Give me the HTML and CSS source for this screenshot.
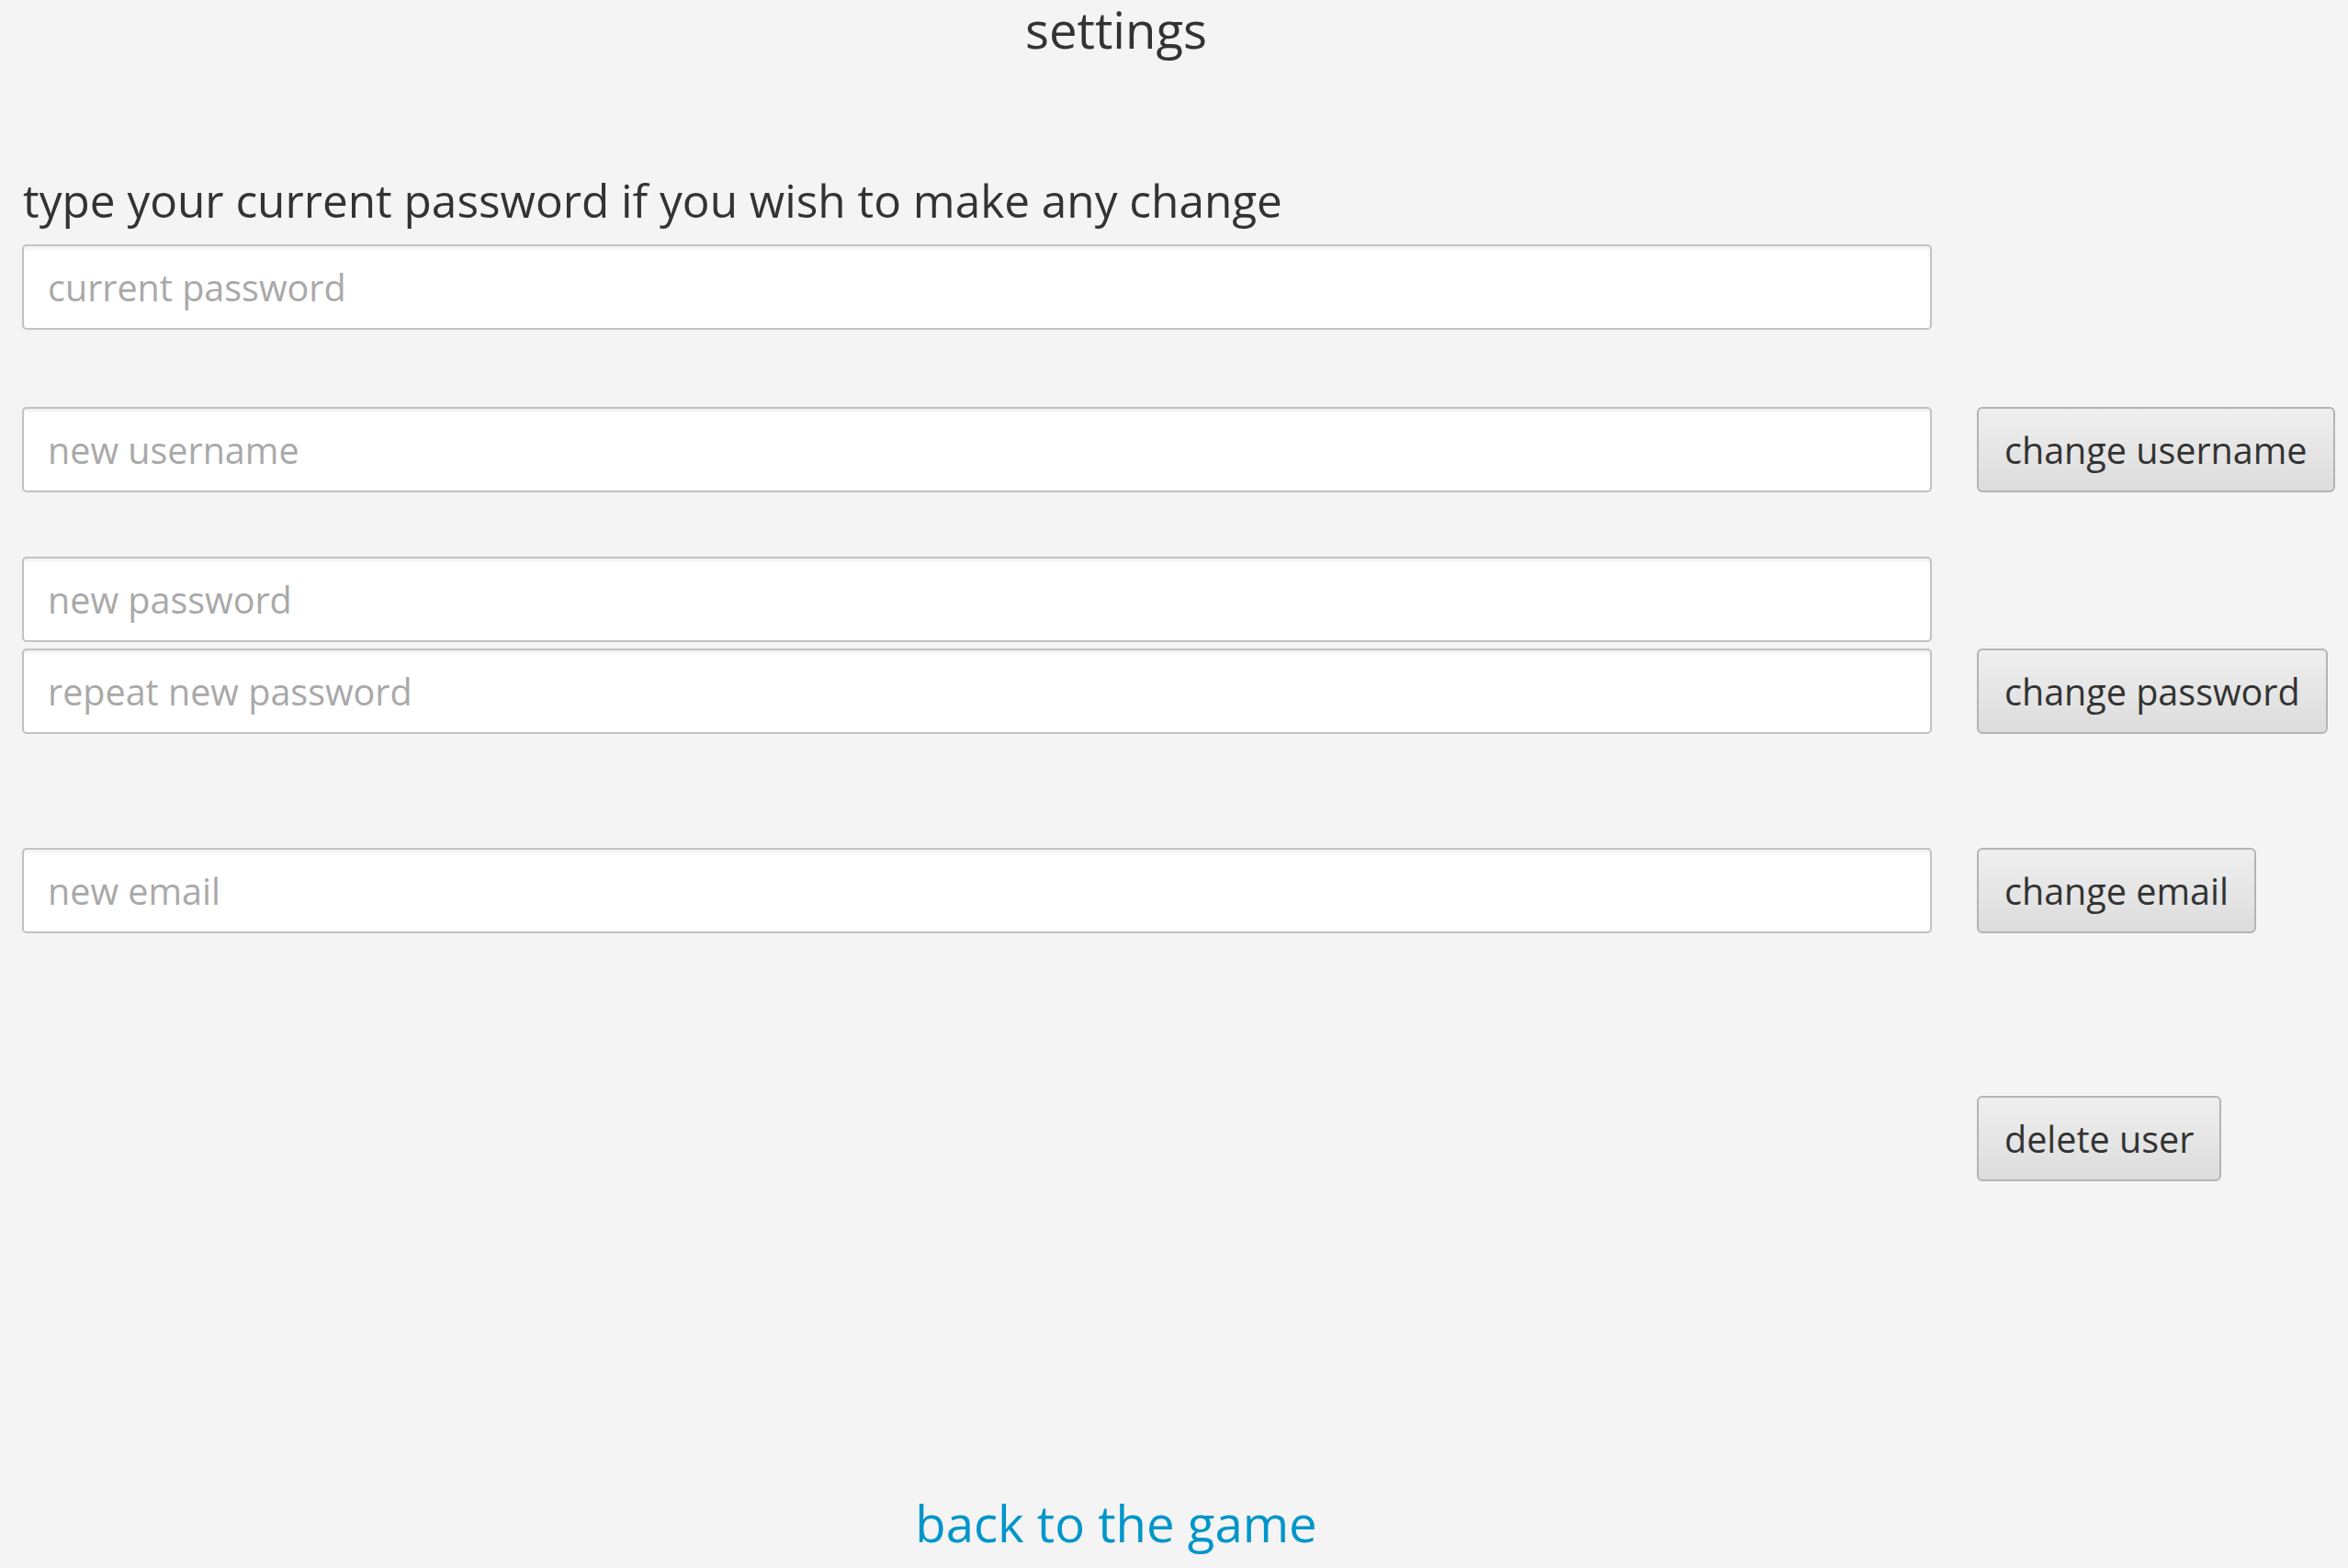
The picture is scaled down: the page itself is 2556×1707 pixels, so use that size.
FILE: index.html
```html
<!DOCTYPE html>
<html lang="en">
<head>
<meta charset="utf-8">
<title>settings</title>
<link rel="stylesheet" href="styles.css">
</head>
<body>
<div class="page">
  <h1 class="title">settings</h1>
  <p class="hint">type your current password if you wish to make any change</p>
  <div class="row row-current">
    <input class="field" type="password" placeholder="current password">
  </div>
  <div class="row row-username">
    <input class="field" type="text" placeholder="new username">
    <button class="btn">change username</button>
  </div>
  <div class="row row-newpass">
    <input class="field" type="password" placeholder="new password">
  </div>
  <div class="row row-repeat">
    <input class="field" type="password" placeholder="repeat new password">
    <button class="btn">change password</button>
  </div>
  <div class="row row-email">
    <input class="field" type="email" placeholder="new email">
    <button class="btn">change email</button>
  </div>
  <div class="row row-delete">
    <span class="spacer"></span>
    <button class="btn">delete user</button>
  </div>
  <div class="footer">
    <a class="back" href="#">back to the game</a>
  </div>
</div>
</body>
</html>
```
FILE: styles.css
```css
html, body {
  margin: 0;
  padding: 0;
  background: #f4f4f4;
}
body {
  font-family: "Open Sans", "Noto Sans", sans-serif;
  color: #333333;
  width: 2556px;
  height: 1707px;
  overflow: hidden;
}
.page {
  width: 2556px;
  display: flex;
  flex-direction: column;
}
.title {
  width: 2430px;
  margin: 0;
  height: 64px;
  font-weight: 400;
  font-size: 54.5px;
  line-height: 64px;
  text-align: center;
  color: #333333;
}
.hint {
  margin: 124px 0 0 25px;
  font-size: 49.5px;
  line-height: 60px;
  height: 60px;
  color: #333333;
}
.row {
  display: flex;
  align-items: center;
  gap: 49px;
  padding-left: 24px;
  height: 93px;
}
.row-current { margin-top: 18px; }
.row-username { margin-top: 84px; }
.row-newpass { margin-top: 70px; }
.row-repeat { margin-top: 7px; }
.row-email { margin-top: 124px; }
.row-delete { margin-top: 177px; }
.field {
  flex: none;
  box-sizing: border-box;
  width: 2079px;
  height: 93px;
  margin: 0;
  padding: 0 26px;
  border: 2px solid #c2c2c2;
  border-radius: 5px;
  background: #ffffff;
  box-shadow: inset 0 3px 3px rgba(0, 0, 0, 0.06);
  font-family: inherit;
  font-size: 39.5px;
  color: #333333;
  outline: none;
}
.field::placeholder {
  color: #a9a9a9;
}
.spacer {
  width: 2079px;
  flex: none;
}
.btn {
  flex: none;
  box-sizing: border-box;
  height: 93px;
  margin: 0;
  padding: 0 28px;
  border: 2px solid #b4b4b4;
  border-radius: 6px;
  background: linear-gradient(#efefef, #dcdcdc);
  font-family: inherit;
  font-size: 39.5px;
  color: #333333;
  white-space: nowrap;
}
.footer {
  width: 2430px;
  margin-top: 337px;
  height: 70px;
  line-height: 70px;
  text-align: center;
}
.back {
  font-size: 54.5px;
  color: #0096c9;
  text-decoration: none;
}
```
